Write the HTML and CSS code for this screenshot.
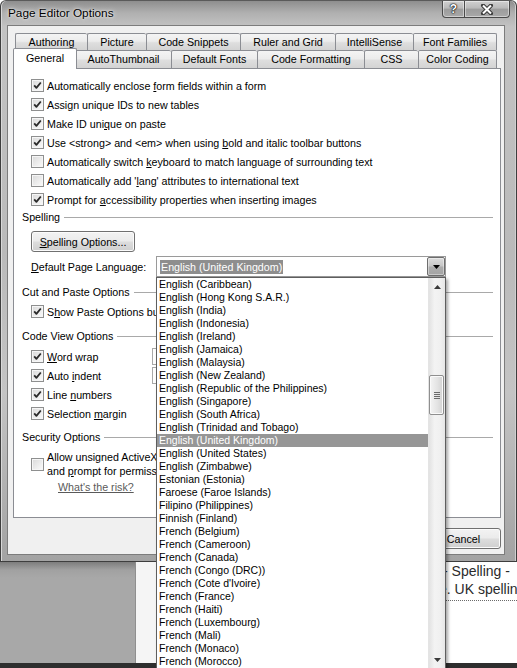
FILE: index.html
```html
<!DOCTYPE html>
<html>
<head>
<meta charset="utf-8">
<title>Page Editor Options</title>
<link rel="stylesheet" href="styles.css">
</head>
<body>
<div class="screen">
  <div class="window">
    <div class="titlebar">
      <span class="title">Page Editor Options</span>
      <div class="caption-btns">
        <span class="cbtn help">?</span>
        <span class="cbtn close"><svg class="xicon" viewBox="0 0 14 11"><path class="xo" d="M3 1.5 L11 9.5 M11 1.5 L3 9.5"/><path class="xi" d="M3 1.5 L11 9.5 M11 1.5 L3 9.5"/></svg></span>
      </div>
    </div>
    <div class="client">
      <div class="tabstrip">
        <div class="tabrow back">
          <span class="tab t72">Authoring</span>
          <span class="tab t59">Picture</span>
          <span class="tab t94">Code Snippets</span>
          <span class="tab t95">Ruler and Grid</span>
          <span class="tab t78">IntelliSense</span>
          <span class="tab t84 last">Font Families</span>
        </div>
        <div class="tabrow front">
          <span class="tab sel">General</span>
          <span class="tab t96">AutoThumbnail</span>
          <span class="tab t86">Default Fonts</span>
          <span class="tab t107">Code Formatting</span>
          <span class="tab t54">CSS</span>
          <span class="tab t79 last">Color Coding</span>
        </div>
      </div>
      <div class="panel">
        <div class="chk"><span class="box"><svg class="ck" viewBox="0 0 11 11"><path d="M2.2 5.4 L4.4 7.9 L8.8 2.5"/></svg></span><span class="lbl">Automatically enclose <u>f</u>orm fields within a form</span></div>
        <div class="chk"><span class="box"><svg class="ck" viewBox="0 0 11 11"><path d="M2.2 5.4 L4.4 7.9 L8.8 2.5"/></svg></span><span class="lbl">Assi<u>g</u>n unique IDs to new tables</span></div>
        <div class="chk"><span class="box"><svg class="ck" viewBox="0 0 11 11"><path d="M2.2 5.4 L4.4 7.9 L8.8 2.5"/></svg></span><span class="lbl">Make ID uni<u>q</u>ue on paste</span></div>
        <div class="chk"><span class="box"><svg class="ck" viewBox="0 0 11 11"><path d="M2.2 5.4 L4.4 7.9 L8.8 2.5"/></svg></span><span class="lbl">Use &lt;strong&gt; and &lt;em&gt; when using <u>b</u>old and italic toolbar buttons</span></div>
        <div class="chk"><span class="box"></span><span class="lbl">Automatically switch <u>k</u>eyboard to match language of surrounding text</span></div>
        <div class="chk"><span class="box"></span><span class="lbl">Automatically add '<u>l</u>ang' attributes to international text</span></div>
        <div class="chk"><span class="box"><svg class="ck" viewBox="0 0 11 11"><path d="M2.2 5.4 L4.4 7.9 L8.8 2.5"/></svg></span><span class="lbl">Prompt for <u>a</u>ccessibility properties when inserting images</span></div>

        <div class="group">Spelling</div>
        <div class="btn spellbtn"><u>S</u>pelling Options...</div>
        <div class="langrow">
          <span class="langlbl"><u>D</u>efault Page Language:</span>
          <div class="combo">
            <span class="seltext">English (United Kingdom)</span>
            <span class="dropbtn"><svg class="arrow" viewBox="0 0 7 4"><path d="M0 0 H7 L3.5 4 Z"/></svg></span>
          </div>
        </div>

        <div class="group g-cut">Cut and Paste Options</div>
        <div class="chk c-paste"><span class="box"><svg class="ck" viewBox="0 0 11 11"><path d="M2.2 5.4 L4.4 7.9 L8.8 2.5"/></svg></span><span class="lbl">S<u>h</u>ow Paste Options bu</span></div>

        <div class="group g-code">Code View Options</div>
        <div class="coderows">
          <div class="chk"><span class="box"><svg class="ck" viewBox="0 0 11 11"><path d="M2.2 5.4 L4.4 7.9 L8.8 2.5"/></svg></span><span class="lbl vl"><u>W</u>ord wrap</span><span class="field"></span></div>
          <div class="chk"><span class="box"><svg class="ck" viewBox="0 0 11 11"><path d="M2.2 5.4 L4.4 7.9 L8.8 2.5"/></svg></span><span class="lbl vl">Auto <u>i</u>ndent</span><span class="field"></span></div>
          <div class="chk"><span class="box"><svg class="ck" viewBox="0 0 11 11"><path d="M2.2 5.4 L4.4 7.9 L8.8 2.5"/></svg></span><span class="lbl">Line <u>n</u>umbers</span></div>
          <div class="chk"><span class="box"><svg class="ck" viewBox="0 0 11 11"><path d="M2.2 5.4 L4.4 7.9 L8.8 2.5"/></svg></span><span class="lbl">Selection <u>m</u>argin</span></div>
        </div>

        <div class="group g-sec">Security Options</div>
        <div class="chk two"><span class="box"></span><span class="lbl">Allow unsigned ActiveX<br>and <u>p</u>rompt for permiss</span></div>
        <div class="risk">What's the risk?</div>
      </div>
      <div class="buttons">
        <span class="btn dlgbtn">OK</span>
        <span class="btn dlgbtn">Cancel</span>
      </div>
    </div>
  </div>

  <div class="below">
    <div class="greyblock"></div>
    <div class="strip"></div>
    <div class="gap"></div>
    <div class="pagebit">
      <div class="pl1">- Spelling -</div>
      <div class="pl2">e. UK spellin</div>
    </div>
  </div>
  <div class="taskbar"></div>

  <div class="droplist">
    <div class="items">
      <div class="it">English (Caribbean)</div>
      <div class="it">English (Hong Kong S.A.R.)</div>
      <div class="it">English (India)</div>
      <div class="it">English (Indonesia)</div>
      <div class="it">English (Ireland)</div>
      <div class="it">English (Jamaica)</div>
      <div class="it">English (Malaysia)</div>
      <div class="it">English (New Zealand)</div>
      <div class="it">English (Republic of the Philippines)</div>
      <div class="it">English (Singapore)</div>
      <div class="it">English (South Africa)</div>
      <div class="it">English (Trinidad and Tobago)</div>
      <div class="it hi">English (United Kingdom)</div>
      <div class="it">English (United States)</div>
      <div class="it">English (Zimbabwe)</div>
      <div class="it">Estonian (Estonia)</div>
      <div class="it">Faroese (Faroe Islands)</div>
      <div class="it">Filipino (Philippines)</div>
      <div class="it">Finnish (Finland)</div>
      <div class="it">French (Belgium)</div>
      <div class="it">French (Cameroon)</div>
      <div class="it">French (Canada)</div>
      <div class="it">French (Congo (DRC))</div>
      <div class="it">French (Cote d'Ivoire)</div>
      <div class="it">French (France)</div>
      <div class="it">French (Haiti)</div>
      <div class="it">French (Luxembourg)</div>
      <div class="it">French (Mali)</div>
      <div class="it">French (Monaco)</div>
      <div class="it">French (Morocco)</div>
    </div>
    <div class="vscroll">
      <div class="sbbtn"><svg class="sarrow" viewBox="0 0 7 4"><path d="M0 4 H7 L3.5 0 Z"/></svg></div>
      <div class="track-top"></div>
      <div class="thumb"><span class="grip"></span><span class="grip"></span><span class="grip"></span><span class="grip"></span></div>
      <div class="track-rest"></div>
      <div class="sbbtn"><svg class="sarrow" viewBox="0 0 7 4"><path d="M0 0 H7 L3.5 4 Z"/></svg></div>
    </div>
  </div>
</div>
</body>
</html>
```

FILE: styles.css
```css
* { box-sizing: border-box; }
html, body { margin: 0; padding: 0; }
body {
  width: 517px;
  height: 668px;
  overflow: hidden;
  background: #fff;
  font-family: "Liberation Sans", Arial, sans-serif;
  font-size: 10.7px;
  color: #000;
}
u { text-decoration: underline; text-underline-offset: 1px; }

.screen { position: relative; width: 517px; height: 668px; }

/* ---------- window frame ---------- */
.window {
  width: 517px;
  height: 562px;
  border: 1px solid #3e3e3e;
  border-top-color: #5a5a5a;
  border-radius: 6px 6px 0 0;
  padding: 0 11px 6px 6px;
  background: linear-gradient(180deg, #8e8e8e 0, #b0b0b0 12px, #c3c3c3 26px, #bababa 45%, #c4c4c4 70%, #a3a3a3 100%);
  box-shadow: inset 1px 0 0 #d8d8d8, inset -1px 0 0 #d0d0d0;
  display: flex;
  flex-direction: column;
}
.titlebar {
  height: 24px;
  flex: none;
  display: flex;
  align-items: flex-start;
  padding-left: 1px;
}
.title {
  font-size: 11.8px;
  line-height: 14px;
  padding-top: 5px;
  color: #000;
  text-shadow: 0 0 5px rgba(255,255,255,0.9), 0 0 2px rgba(255,255,255,0.8);
}
.caption-btns {
  margin-left: auto;
  margin-right: -5px;
  display: flex;
  height: 17px;
}
.cbtn {
  height: 17px;
  border: 1px solid #4a4a4a;
  border-top: none;
  background: linear-gradient(180deg, #d0d0d0 0, #b9b9b9 45%, #9c9c9c 50%, #a9a9a9 100%);
  box-shadow: inset 0 0 0 1px rgba(255,255,255,0.45);
  display: flex;
  align-items: center;
  justify-content: center;
}
.help {
  width: 23px;
  border-radius: 0 0 0 4px;
  color: #fff;
  font-weight: bold;
  font-size: 12px;
  text-shadow: 0 0 1px #000, 0 0 1px #000, 0 0 2px #000;
}
.close {
  width: 45px;
  border-left: none;
  border-radius: 0 0 4px 0;
}
.xicon { width: 14px; height: 11px; }
.xo { stroke: #3a3a3a; stroke-width: 4; fill: none; stroke-linecap: round; }
.xi { stroke: #fff; stroke-width: 2; fill: none; }

/* ---------- client area ---------- */
.client {
  height: 530px;
  flex: none;
  border: 1px solid #7c7c7c;
  background: #f0f0f0;
  padding: 7px 3px 0 5px;
}

/* tabs */
.tabstrip { height: 35px; }
.tabrow { display: flex; padding-left: 2px; }
.tabrow.back { height: 17px; }
.tabrow.front { height: 18px; align-items: flex-end; }
.tab {
  height: 100%;
  border: 1px solid #8b8d93;
  border-bottom: none;
  border-right: none;
  border-radius: 2px 2px 0 0;
  background: linear-gradient(180deg, #f4f4f4 0, #ececec 45%, #dedede 55%, #d3d3d3 100%);
  display: flex;
  align-items: center;
  justify-content: center;
  white-space: nowrap;
  line-height: 13px;
}
.tab.last { border-right: 1px solid #8b8d93; }
.tab.sel {
  position: relative;
  z-index: 2;
  width: 64px;
  height: 21px;
  margin: 0 -2px -1px -2px;
  background: #fff;
  border-right: 1px solid #8b8d93;
  padding-bottom: 1px;
}
.t72 { width: 72px; } .t59 { width: 59px; } .t94 { width: 94px; }
.t95 { width: 95px; } .t78 { width: 78px; } .t84 { width: 84px; }
.t96 { width: 96px; } .t86 { width: 86px; } .t107 { width: 107px; }
.t54 { width: 54px; } .t79 { width: 79px; }

/* panel */
.panel {
  width: 488px;
  height: 450px;
  border: 1px solid #8b8d93;
  background: #fff;
  padding: 7px 7px 0 8px;
}
.chk {
  height: 19px;
  margin-left: 9px;
  display: flex;
  align-items: center;
}
.lbl { margin-left: 3px; line-height: 14px; white-space: nowrap; }
.box {
  flex: none;
  width: 13px;
  height: 13px;
  border: 1px solid #8e8f8f;
  background: linear-gradient(135deg, #d9d9d9 0, #ececec 55%, #fbfbfb 100%);
  box-shadow: inset 0 0 0 1px #f6f6f6;
  display: flex;
  align-items: center;
  justify-content: center;
}
.ck { width: 11px; height: 11px; }
.ck path { fill: none; stroke: #2a2a2a; stroke-width: 1.8; stroke-linejoin: round; }

.group {
  height: 15px;
  display: flex;
  align-items: center;
  white-space: nowrap;
}
.group::after {
  content: "";
  flex: 1;
  margin-left: 4px;
  margin-top: 1px;
  border-top: 1px solid #a9a9a9;
}
.g-cut { margin-top: 7px; }
.g-code { margin-top: 7px; }
.g-sec { margin-top: 6px; }

.btn {
  height: 21px;
  border: 1px solid #707070;
  border-radius: 3px;
  background: linear-gradient(180deg, #f3f3f3 0, #ebebeb 48%, #dddddd 52%, #cfcfcf 100%);
  box-shadow: inset 0 0 0 1px #fbfbfb;
  display: flex;
  align-items: center;
  justify-content: center;
  white-space: nowrap;
}
.spellbtn { width: 104px; margin: 7px 0 0 9px; }

.langrow {
  margin: 4px 0 0 9px;
  height: 21px;
  display: flex;
  align-items: center;
}
.langlbl { width: 125px; white-space: nowrap; }
.combo {
  width: 290px;
  height: 21px;
  border: 1px solid #9a9a9a;
  background: #fff;
  display: flex;
  align-items: center;
  padding-left: 3px;
}
.seltext {
  background: #8e8e8e;
  color: #fff;
  line-height: 14px;
  padding: 0 1px;
}
.dropbtn {
  margin-left: auto;
  width: 18px;
  height: 19px;
  border: 1px solid #6e6e6e;
  border-radius: 2px;
  background: linear-gradient(180deg, #dcdcdc 0, #c6c6c6 48%, #adadad 52%, #a4a4a4 100%);
  box-shadow: inset 0 0 0 1px rgba(255,255,255,0.4);
  display: flex;
  align-items: center;
  justify-content: center;
}
.arrow { width: 7px; height: 4px; }
.arrow path { fill: #000; }

.c-paste { margin-top: 3px; }
.coderows { margin-top: 4px; }
.vl { width: 105px; }
.field {
  width: 40px;
  height: 17px;
  border: 1px solid #a9a9a9;
  background: #fff;
}
.chk.two { height: 28px; margin-top: 6px; }
.risk {
  margin: 2px 0 0 36px;
  line-height: 14px;
  color: #5a5a5a;
  text-decoration: underline;
  text-underline-offset: 1px;
}

.buttons {
  margin-top: 10px;
  display: flex;
  justify-content: flex-end;
  gap: 6px;
}
.dlgbtn { width: 75px; }

/* ---------- background behind the dialog ---------- */
.below {
  height: 101px;
  display: flex;
  align-items: stretch;
}
.greyblock {
  flex: none;
  width: 135px;
  background-color: #a7a7a7;
  background-image: linear-gradient(180deg, #7d7d7d 0, #a1a1a1 8px, #a8a8a8 16px, #a8a8a8 100%);
}
.strip {
  flex: none;
  width: 21px;
  background: #f5f5f5;
  border-left: 1px solid #8f8f8f;
}
.gap { flex: none; width: 287px; background: #fff; }
.pagebit {
  flex: 1;
  min-width: 0;
  overflow: hidden;
  font-size: 14px;
  line-height: 18px;
  color: #2a2a2a;
  white-space: nowrap;
}
.pl1 { height: 18px; }
.pl2 {
  margin-left: -4px;
  padding-bottom: 2px;
  height: 21px;
  border-bottom: 1px dotted #6a6a6a;
}
.taskbar { height: 5px; background: #2e2e2e; }

/* ---------- dropped-down list (popup) ---------- */
.droplist {
  position: absolute;
  left: 156px;
  top: 277px;
  width: 290px;
  height: 391px;
  border: 1px solid #5e5e5e;
  border-bottom: none;
  background: #fff;
  display: flex;
  box-shadow: 2px 2px 3px rgba(0,0,0,0.35);
  z-index: 5;
}
.items { flex: 1; overflow: hidden; font-size: 10.5px; }
.it {
  height: 13px;
  line-height: 13px;
  padding-left: 2px;
  white-space: nowrap;
}
.it.hi { background: #969696; color: #fff; }
.vscroll {
  width: 17px;
  display: flex;
  flex-direction: column;
  background: linear-gradient(90deg, #e2e2e2 0, #f3f3f3 35%, #f0f0f0 70%, #e6e6e6 100%);
  border-left: 1px solid #e4e4e4;
}
.sbbtn {
  height: 17px;
  flex: none;
  display: flex;
  align-items: center;
  justify-content: center;
}
.sarrow { width: 7px; height: 4px; }
.sarrow path { fill: #3a3a3a; }
.track-top { height: 80px; flex: none; }
.thumb {
  height: 40px;
  flex: none;
  margin: 0 1px 0 0;
  border: 1px solid #8f8f8f;
  border-radius: 2px;
  background: linear-gradient(90deg, #f4f4f4 0, #e2e2e2 60%, #d2d2d2 100%);
  box-shadow: inset 0 0 0 1px #fafafa;
  display: flex;
  flex-direction: column;
  align-items: center;
  justify-content: center;
  gap: 1px;
}
.grip { width: 6px; height: 1px; background: #6a6a6a; }
.track-rest { flex: 1; }
```
